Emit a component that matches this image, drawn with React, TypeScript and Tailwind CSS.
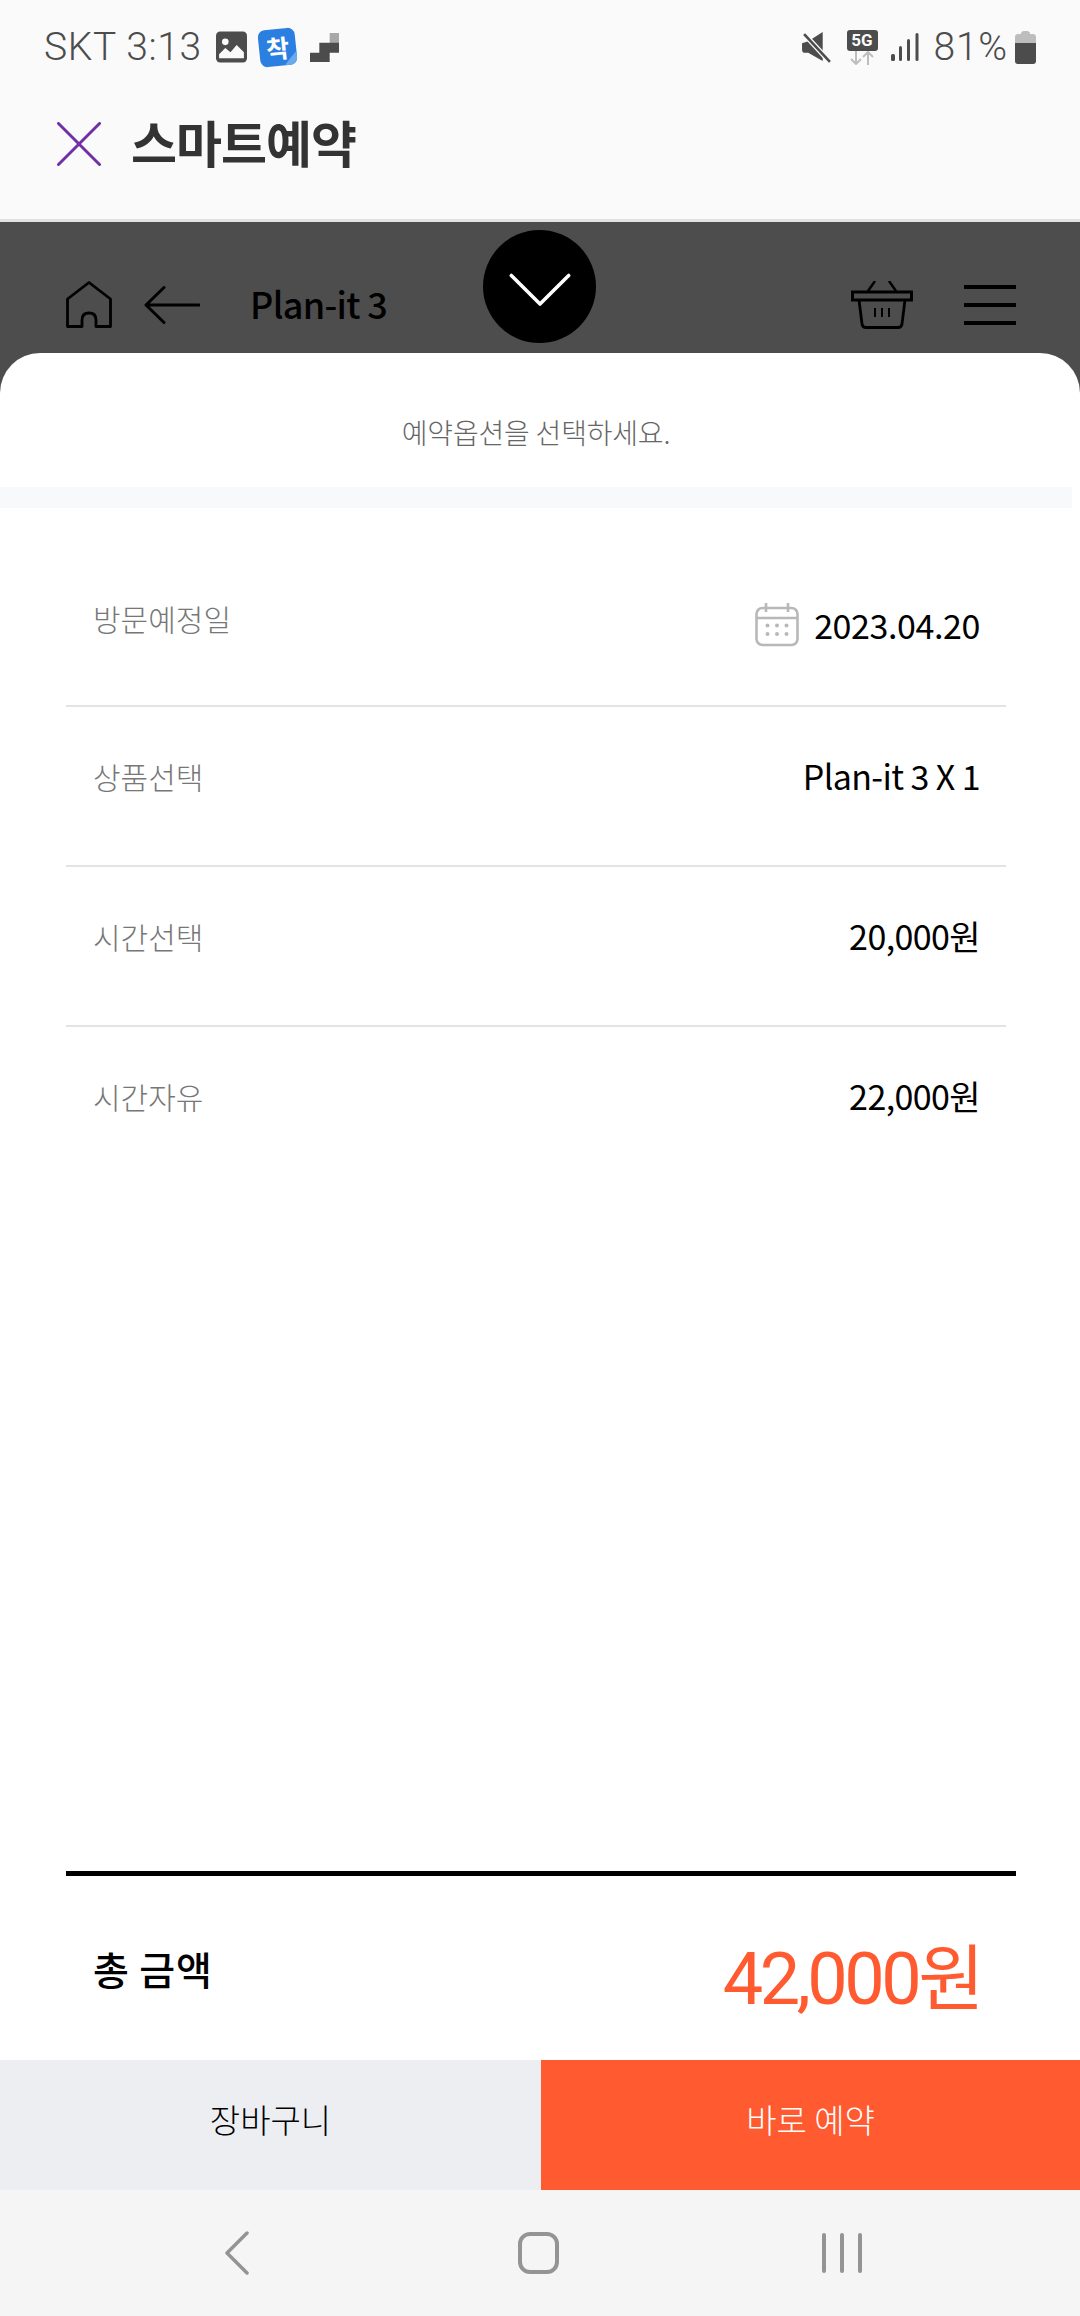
const FONT = "font-['Noto_Sans_CJK_KR','Noto_Sans',sans-serif]";

const ROWS = [
  { label: "상품선택", value: "Plan-it 3 X 1" },
  { label: "시간선택", value: "20,000원" },
  { label: "시간자유", value: "22,000원" },
];

function CalendarIcon() {
  return (
    <svg viewBox="0 0 44 44" className="w-[44px] h-[44px] mr-[15px]">
      <rect x="1.500" y="5" width="41" height="37" rx="6" fill="none" stroke="#b8b8b8" strokeWidth="2.600" />
      <path d="M1.500 15 H42.500 M11 0 V9 M33 0 V9" fill="none" stroke="#b8b8b8" strokeWidth="2.600" />
      <g fill="#b8b8b8">
        <circle cx="12.500" cy="22.500" r="2" />
        <circle cx="22" cy="22.500" r="2" />
        <circle cx="31.500" cy="22.500" r="2" />
        <circle cx="12.500" cy="31" r="2" />
        <circle cx="22" cy="31" r="2" />
        <circle cx="31.500" cy="31" r="2" />
      </g>
    </svg>
  );
}

function StatusBar() {
  return (
    <div className="h-[92px] shrink-0 flex items-center justify-between pl-[44px] pr-[44px] pt-[2px] text-[#4c4c4c] font-['Roboto',sans-serif] font-light text-[39px]">
      <div className="flex items-center">
        <span className="tracking-[0.6px]">SKT 3:13</span>
        {/* gallery notification */}
        <svg viewBox="0 0 30 30" className="w-[31px] h-[32px] ml-[14px]">
          <rect width="30" height="30" rx="4" fill="#4c4c4c" />
          <circle cx="9" cy="10" r="3.200" fill="#fafafa" />
          <path d="M3 26 L3 22 L9 16 L14 20 L20 13 L27 20 L27 26 Z" fill="#fafafa" />
        </svg>
        {/* blue badge */}
        <div className="relative w-[37px] h-[37px] ml-[12px] rounded-[7px] -rotate-6 bg-[#2b7fe0] overflow-hidden flex items-center justify-center text-white text-[25px] font-bold font-['Noto_Sans_CJK_KR',sans-serif] leading-none">
          착
          <div className="absolute right-[-7px] bottom-[-7px] w-[16px] h-[16px] rotate-45 bg-[#6aa9ec]" />
        </div>
        <svg viewBox="0 0 28 28" className="w-[29px] h-[29px] ml-[14px]">
          <rect x="19" y="0" width="9" height="10" fill="#a8a8a8" />
          <path d="M9 9.500 H28 V19 H19 V28 H0 V19 H9 Z" fill="#4c4c4c" />
        </svg>
      </div>
      <div className="flex items-center">
        {/* muted speaker */}
        <svg viewBox="0 0 28 30" className="w-[29px] h-[31px]">
          <path d="M0 11 L6 9 L20 0 V28 L6 20 H2 Q0 20 0 17 Z" fill="#4c4c4c" />
          <path d="M2 2 L27 29" stroke="#fafafa" strokeWidth="5" />
          <path d="M2 2 L27 29" stroke="#4c4c4c" strokeWidth="2.500" />
        </svg>
        <div className="flex flex-col items-center w-[31px] ml-[16px]">
          <div className="w-[31px] h-[21px] rounded-[3px] bg-[#4c4c4c] text-[#fafafa] font-['Roboto',sans-serif] font-bold text-[17px] leading-[21px] text-center">
            5G
          </div>
          <svg viewBox="0 0 24 14" className="w-[24px] h-[14px]">
            <path d="M6 0 V13 M1 8 L6 13 L11 8 M18 14 V1 M13 6 L18 1 L23 6" fill="none" stroke="#bdbdbd" strokeWidth="2" />
          </svg>
        </div>
        <svg viewBox="0 0 28 30" className="w-[28px] h-[30px] ml-[13px]">
          <rect x="0" y="22" width="4" height="7" rx="1.500" fill="#4c4c4c" />
          <rect x="8" y="14" width="3" height="15" rx="1.500" fill="#4c4c4c" />
          <rect x="16" y="7" width="3" height="22" rx="1.500" fill="#4c4c4c" />
          <rect x="24.500" y="1" width="3" height="28" rx="1.500" fill="#4c4c4c" />
        </svg>
        <span className="ml-[15px] tracking-[0.8px]">81%</span>
        <svg viewBox="0 0 21 33" className="w-[21px] h-[33px] ml-[7px]">
          <path d="M6 3 Q6 0 9 0 H12 Q15 0 15 3 H18 Q21 3 21 6 V12 H0 V6 Q0 3 3 3 Z" fill="#bdbdbd" />
          <path d="M0 12 H21 V30 Q21 33 18 33 H3 Q0 33 0 30 Z" fill="#4c4c4c" />
        </svg>
      </div>
    </div>
  );
}

function AppHeader() {
  return (
    <div className="h-[127px] shrink-0 flex items-center pl-[57px] pb-[24px]">
      <svg viewBox="0 0 44 44" className="w-[44px] h-[44px]">
        <path d="M1.500 1.500 L42.500 42.500 M42.500 1.500 L1.500 42.500" stroke="#7030a8" strokeWidth="3" strokeLinecap="round" />
      </svg>
      <h1 className={`${FONT} ml-[30px] -mt-[5px] text-[50px] font-bold text-[#333333] leading-none tracking-[-1px]`}>
        스마트예약
      </h1>
    </div>
  );
}

function DimmedNav() {
  return (
    <div className="relative h-[131px] shrink-0 flex items-center pl-[66px] pr-[64px] pt-[34px]">
      <svg viewBox="0 0 46 47" className="w-[46px] h-[47px]">
        <path d="M1.500 45.500 V18 L23 1.500 L44.500 18 V45.500 H30 V39 Q30 32 23 32 Q16 32 16 39 V45.500 Z" fill="none" stroke="#000" strokeWidth="2.800" strokeLinejoin="round" />
      </svg>
      <svg viewBox="0 0 56 38" className="w-[56px] h-[38px] ml-[32px]">
        <path d="M55 19 H2 M20 1.500 L2 19 L20 36.500" fill="none" stroke="#000" strokeWidth="3" strokeLinecap="round" strokeLinejoin="round" />
      </svg>
      <span className={`${FONT} ml-[50px] -mt-[3px] text-[36px] font-medium text-black leading-none tracking-[-0.7px]`}>
        Plan-it 3
      </span>
      <div className="ml-auto flex items-center gap-[51px]">
        <svg viewBox="0 0 62 48" className="w-[62px] h-[48px]">
          <path d="M17 10 L24 0 M45 10 L38 0" fill="none" stroke="#000" strokeWidth="2.500" />
          <rect x="1.500" y="11" width="59" height="8" fill="none" stroke="#000" strokeWidth="3" />
          <path d="M8 19 L11 43 Q11.500 46.500 15 46.500 H47 Q50.500 46.500 51 43 L54 19" fill="none" stroke="#000" strokeWidth="2.800" />
          <path d="M24 27 V36 M31 27 V36 M38 27 V36" stroke="#000" strokeWidth="2" />
        </svg>
        <div className="flex flex-col justify-between w-[52px] h-[40px]">
          <div className="h-[4px] bg-black" />
          <div className="h-[4px] bg-black" />
          <div className="h-[4px] bg-black" />
        </div>
      </div>
      {/* collapse handle overlapping the nav */}
      <div className="absolute left-[483px] top-[8px] w-[113px] h-[113px] rounded-full bg-black flex items-center justify-center pt-[6px]">
        <svg viewBox="0 0 66 36" className="w-[62px] h-[34px]">
          <path d="M2.500 2.500 L33 33 L63.500 2.500" fill="none" stroke="#fff" strokeWidth="3.800" strokeLinecap="round" strokeLinejoin="round" />
        </svg>
      </div>
    </div>
  );
}

function OptionRow({ label, value }: { label: string; value: string }) {
  return (
    <div className="h-[160px] ml-[66px] mr-[74px] border-b-2 border-[#e3e3e3] last:border-b-0 flex items-start justify-between pl-[27px] pr-[26px]">
      <span className="mt-[49px] text-[30px] leading-[40px] text-[#777777] font-light">{label}</span>
      <span className="mt-[49px] flex items-center text-[34px] leading-[40px] text-black tracking-[-0.6px]">
        {value}
      </span>
    </div>
  );
}

export default function App() {
  return (
    <div className={`${FONT} w-[1080px] h-[2316px] overflow-hidden flex flex-col bg-[#fafafa]`}>
      <StatusBar />
      <AppHeader />
      <div className="h-[3px] shrink-0 bg-[#e2e2e2]" />

      <div className="flex-1 min-h-0 flex flex-col bg-[#4d4d4d]">
        <DimmedNav />

        <div className="flex-1 min-h-0 flex flex-col bg-white rounded-t-[40px]">
          <p className="h-[134px] w-[1072px] shrink-0 pt-[59px] text-center text-[28px] leading-[40px] font-light text-[#666666] tracking-[-0.2px]">
            예약옵션을 선택하세요.
          </p>
          <div className="h-[21px] w-[1072px] shrink-0 bg-[#f8f9fa]" />

          {/* option list */}
          <div className="flex-1 pt-[39px]">
            <div className="h-[160px] ml-[66px] mr-[74px] border-b-2 border-[#e3e3e3] flex items-start justify-between pl-[27px] pr-[26px]">
              <span className="mt-[51px] text-[30px] leading-[40px] text-[#777777] font-light">방문예정일</span>
              <span className="mt-[56px] flex items-center text-[34px] leading-[44px] text-black tracking-[-0.4px]">
                <CalendarIcon />
                2023.04.20
              </span>
            </div>
            {ROWS.map((row) => (
              <OptionRow key={row.label} label={row.label} value={row.value} />
            ))}
          </div>

          {/* total */}
          <div className="ml-[66px] w-[950px] h-[5px] shrink-0 bg-black" />
          <div className="h-[184px] shrink-0 flex items-center justify-between pl-[27px] pr-[99px] ml-[66px]">
            <span className="text-[39px] font-medium text-black leading-none tracking-[0.8px]">총 금액</span>
            <span className="text-[72px] font-normal text-[#ff5a30] leading-none mt-[24px] tracking-[-3.500px] font-['Roboto','Noto_Sans_CJK_KR',sans-serif]">
              42,000원
            </span>
          </div>

          {/* actions */}
          <div className="h-[130px] shrink-0 grid grid-cols-[541px_539px]">
            <button className="bg-[#edeef2] pb-[12px] text-[33px] text-black font-light leading-none">장바구니</button>
            <button className="bg-[#ff5a30] pb-[12px] text-[33px] text-white font-light leading-none">바로 예약</button>
          </div>

          {/* system navigation */}
          <div className="h-[126px] shrink-0 bg-[#f5f5f5] flex items-center pl-[224px]">
            <svg viewBox="0 0 26 44" className="w-[26px] h-[44px]">
              <path d="M23 2 L3 22 L23 42" fill="none" stroke="#949494" strokeWidth="3.500" strokeLinecap="round" strokeLinejoin="round" />
            </svg>
            <div className="ml-[268px] w-[41px] h-[42px] border-[4px] border-[#949494] rounded-[12px]" />
            <div className="ml-[263px] flex gap-[14px]">
              <div className="w-[4px] h-[40px] bg-[#949494] rounded-full" />
              <div className="w-[4px] h-[40px] bg-[#949494] rounded-full" />
              <div className="w-[4px] h-[40px] bg-[#949494] rounded-full" />
            </div>
          </div>
        </div>
      </div>
    </div>
  );
}
